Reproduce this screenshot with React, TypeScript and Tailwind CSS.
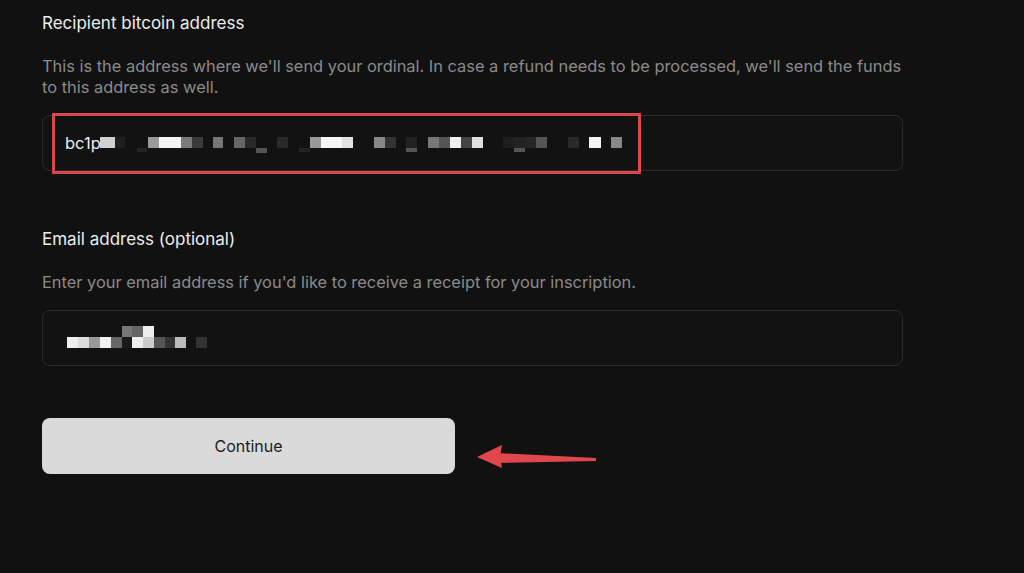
type Block = [number, number, number, number, string];

// pixelated address blocks (x, y, w, h, fill), page x minus the input box origin
const addressBlocks: Block[] = [
  [57, 21, 15, 11, '#d0d0d0'],
  [72, 21, 10, 11, '#1e1e1e'],
  [94, 32, 10, 4, '#242424'],
  [105, 21, 11, 11, '#9a9a9a'],
  [116, 21, 22, 11, '#f4f4f4'],
  [138, 21, 11, 11, '#7a7a7a'],
  [149, 21, 11, 11, '#3a3a3a'],
  [170, 21, 10, 11, '#777777'],
  [191, 21, 11, 11, '#666666'],
  [202, 21, 11, 11, '#2a2a2a'],
  [213, 32, 11, 5, '#555555'],
  [234, 21, 11, 11, '#2a2a2a'],
  [256, 32, 11, 4, '#232323'],
  [267, 21, 11, 11, '#999999'],
  [278, 21, 21, 11, '#f6f6f6'],
  [299, 21, 11, 11, '#e2e2e2'],
  [331, 21, 11, 11, '#888888'],
  [342, 21, 11, 11, '#333333'],
  [363, 21, 11, 11, '#222222'],
  [363, 32, 11, 4, '#555555'],
  [385, 21, 11, 11, '#777777'],
  [396, 21, 11, 11, '#555555'],
  [407, 21, 11, 11, '#f0f0f0'],
  [418, 21, 11, 11, '#444444'],
  [429, 21, 11, 11, '#e0e0e0'],
  [460, 21, 11, 11, '#1e1e1e'],
  [471, 21, 11, 11, '#222222'],
  [471, 32, 11, 4, '#555555'],
  [482, 21, 11, 11, '#262626'],
  [493, 21, 11, 11, '#555555'],
  [525, 21, 11, 11, '#2a2a2a'],
  [546, 21, 12, 11, '#f4f4f4'],
  [568, 21, 11, 11, '#888888'],
];

const emailBlocks: Block[] = [
  [79, 15, 10, 11, '#777777'],
  [89, 15, 11, 11, '#666666'],
  [100, 15, 11, 11, '#eeeeee'],
  [24, 26, 11, 11, '#eeeeee'],
  [35, 26, 11, 11, '#dddddd'],
  [46, 26, 11, 11, '#999999'],
  [57, 26, 11, 11, '#f0f0f0'],
  [68, 26, 11, 11, '#666666'],
  [79, 26, 10, 11, '#1a1a1a'],
  [89, 26, 11, 11, '#eeeeee'],
  [100, 26, 11, 11, '#cccccc'],
  [111, 26, 11, 11, '#555555'],
  [122, 26, 10, 11, '#333333'],
  [132, 26, 11, 11, '#bbbbbb'],
  [153, 26, 11, 11, '#333333'],
];

const Mosaic = ({ blocks }: { blocks: Block[] }) => (
  <svg className="absolute left-0 top-0" width="600" height="56" viewBox="0 0 600 56">
    {blocks.map(([x, y, w, h, fill], i) => (
      <rect key={i} x={x} y={y} width={w} height={h} fill={fill} />
    ))}
  </svg>
);

const Field = ({
  label,
  hint,
  children,
}: {
  label: string;
  hint: React.ReactNode;
  children: React.ReactNode;
}) => (
  <div>
    <h2 className="text-[17px] leading-[22px] text-[#ededed]">{label}</h2>
    <p className="mt-[22px] text-[16.4px] leading-[21px] text-[#8b8b8b]">{hint}</p>
    <div className="relative mt-[17px] h-[56px] rounded-lg border border-[#2b2b2b] bg-[#121212]">
      {children}
    </div>
  </div>
);

export default function App() {
  return (
    <div className="relative min-h-screen bg-[#111111] font-['Inter',sans-serif]">
      <div className="w-[903px] pl-[42px] pt-[12px]">
        <Field
          label="Recipient bitcoin address"
          hint={
            <>
              This is the address where we'll send your ordinal. In case a refund needs to be processed, we'll send the funds
              <br />
              to this address as well.
            </>
          }
        >
          <Mosaic blocks={addressBlocks} />
          <span className="absolute left-[22px] top-[16px] text-[16.5px] leading-[22px] text-[#eeeeee]">bc1p</span>
          {/* annotation box */}
          <div className="absolute left-[9px] top-[-3px] h-[61px] w-[589px] border-[3px] border-[#d9474b]" />
        </Field>

        <div className="mt-[57px]">
          <Field
            label="Email address (optional)"
            hint="Enter your email address if you'd like to receive a receipt for your inscription."
          >
            <Mosaic blocks={emailBlocks} />
          </Field>
        </div>

        <div className="mt-[52px] flex items-start">
          <button className="h-[56px] w-[413px] rounded-lg bg-[#dadada] text-[16px] text-[#1c1c1c]">
            Continue
          </button>
          <svg className="ml-[20px] mt-[24px]" width="124" height="30" viewBox="0 0 124 30">
            <path d="M22 11 L121 16 L121 19 L22 21 Z" fill="#e0474a" />
            <path d="M2 15 L27 3 L25 15 L27 26 Z" fill="#e0474a" />
          </svg>
        </div>
      </div>
    </div>
  );
}
